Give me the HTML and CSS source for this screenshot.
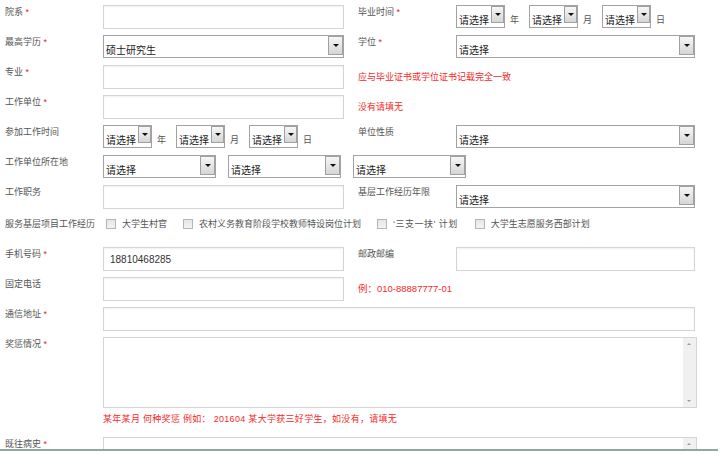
FILE: index.html
```html
<!DOCTYPE html>
<html lang="zh-CN">
<head>
  <meta charset="UTF-8">
  <title>个人信息</title>
  <link rel="stylesheet" href="styles.css">
</head>
<body>
  <div class="page">
    <form class="info-form">
      <div class="row">
        <label class="lbl">院系 <i>*</i></label>
        <div class="field"><input class="txt" type="text"></div>
        <label class="lbl lbl-r">毕业时间 <i>*</i></label>
        <div class="field field-r">
          <span class="sel sel-s"><select><option>请选择</option></select></span><span class="unit">年</span>
          <span class="sel sel-s"><select><option>请选择</option></select></span><span class="unit">月</span>
          <span class="sel sel-s"><select><option>请选择</option></select></span><span class="unit">日</span>
        </div>
      </div>

      <div class="row">
        <label class="lbl">最高学历 <i>*</i></label>
        <div class="field"><span class="sel sel-full"><select><option>硕士研究生</option></select></span></div>
        <label class="lbl lbl-r">学位 <i>*</i></label>
        <div class="field field-r"><span class="sel sel-full"><select><option>请选择</option></select></span></div>
      </div>

      <div class="row">
        <label class="lbl">专业 <i>*</i></label>
        <div class="field"><input class="txt" type="text"></div>
        <span class="hint hint-r">应与毕业证书或学位证书记载完全一致</span>
      </div>

      <div class="row">
        <label class="lbl">工作单位 <i>*</i></label>
        <div class="field"><input class="txt" type="text"></div>
        <span class="hint hint-r">没有请填无</span>
      </div>

      <div class="row">
        <label class="lbl">参加工作时间</label>
        <div class="field">
          <span class="sel sel-s"><select><option>请选择</option></select></span><span class="unit">年</span>
          <span class="sel sel-s"><select><option>请选择</option></select></span><span class="unit">月</span>
          <span class="sel sel-s"><select><option>请选择</option></select></span><span class="unit">日</span>
        </div>
        <label class="lbl lbl-r">单位性质</label>
        <div class="field field-r"><span class="sel sel-full"><select><option>请选择</option></select></span></div>
      </div>

      <div class="row">
        <label class="lbl">工作单位所在地</label>
        <span class="sel sel-m"><select><option>请选择</option></select></span>
        <span class="sel sel-m"><select><option>请选择</option></select></span>
        <span class="sel sel-m"><select><option>请选择</option></select></span>
      </div>

      <div class="row">
        <label class="lbl">工作职务</label>
        <div class="field"><input class="txt" type="text"></div>
        <label class="lbl lbl-r">基层工作经历年限</label>
        <div class="field field-r"><span class="sel sel-full"><select><option>请选择</option></select></span></div>
      </div>

      <div class="row row-check">
        <label class="lbl">服务基层项目工作经历</label>
        <label class="check"><input type="checkbox">大学生村官</label>
        <label class="check"><input type="checkbox">农村义务教育阶段学校教师特设岗位计划</label>
        <label class="check check-quote"><input type="checkbox">‘三支一扶’ 计划</label>
        <label class="check"><input type="checkbox">大学生志愿服务西部计划</label>
      </div>

      <div class="row">
        <label class="lbl">手机号码 <i>*</i></label>
        <div class="field"><input class="txt" type="text" value="18810468285"></div>
        <label class="lbl lbl-r">邮政邮编</label>
        <div class="field field-r"><input class="txt" type="text"></div>
      </div>

      <div class="row">
        <label class="lbl">固定电话</label>
        <div class="field"><input class="txt" type="text"></div>
        <span class="hint hint-r hint-num">例：010-88887777-01</span>
      </div>

      <div class="row">
        <label class="lbl">通信地址 <i>*</i></label>
        <div class="field field-wide"><input class="txt" type="text"></div>
      </div>

      <div class="row row-area">
        <label class="lbl">奖惩情况 <i>*</i></label>
        <div class="area">
          <textarea></textarea>
          <div class="scrollbar"><span class="up"></span><span class="down"></span></div>
        </div>
      </div>
      <div class="row row-note">
        <span class="hint">某年某月 何种奖惩 例如： 201604 某大学获三好学生，如没有，请填无</span>
      </div>

      <div class="row row-area">
        <label class="lbl">既往病史 <i>*</i></label>
        <div class="area">
          <textarea></textarea>
          <div class="scrollbar"><span class="up"></span><span class="down"></span></div>
        </div>
      </div>
    </form>
  </div>
  <div class="rule"></div>
</body>
</html>
```

FILE: styles.css
```css
* {
  margin: 0;
  padding: 0;
  box-sizing: border-box;
}

body {
  font-family: "Liberation Sans", "Noto Sans CJK SC", sans-serif;
  font-size: 9px;
  color: #555;
  background-color: #fff;
}

.page {
  height: 449px;
  overflow: hidden;
}

.info-form {
  padding-top: 5px;
}

.row {
  display: flex;
  align-items: flex-start;
  height: 24px;
  margin-bottom: 6px;
}

.lbl {
  width: 103px;
  padding-left: 5px;
  line-height: 14px;
  white-space: nowrap;
  flex-shrink: 0;
}

.lbl i {
  font-style: normal;
  color: #e02626;
}

.lbl-r {
  width: 98px;
  padding-left: 0;
  margin-left: 14px;
}

.field {
  display: flex;
  align-items: flex-start;
  width: 241px;
  flex-shrink: 0;
}

.field-r {
  width: 239px;
}

.field-wide {
  width: 592px;
}

.txt {
  width: 100%;
  height: 24px;
  border: 1px solid #d4d4d4;
  box-shadow: inset 0 1px 2px rgba(0, 0, 0, 0.06);
  padding: 0 6px;
  font-family: inherit;
  font-size: 10px;
  color: #333;
  outline: none;
}

/* select boxes with the old-style grey arrow button */
.sel {
  position: relative;
  display: inline-block;
  height: 23px;
  flex-shrink: 0;
}

.sel select {
  -webkit-appearance: none;
  appearance: none;
  width: 100%;
  height: 23px;
  border: 1px solid #a3a3a3;
  background-color: #fff;
  padding: 8px 0 0 2px;
  font-family: inherit;
  font-size: 10px;
  line-height: 12px;
  color: #222;
  outline: none;
}

.sel::after {
  content: "";
  position: absolute;
  top: 1px;
  right: 1px;
  bottom: 5px;
  width: 11px;
  border: 1px solid #a0a0a0;
  background: linear-gradient(to bottom, #f6f6f6, #d6d6d6);
  pointer-events: none;
}

.sel::before {
  content: "";
  position: absolute;
  z-index: 1;
  top: 8px;
  right: 4px;
  border-left: 3px solid transparent;
  border-right: 3px solid transparent;
  border-top: 3px solid #111;
  pointer-events: none;
}

.sel-s {
  width: 49px;
}

.sel-full {
  width: 100%;
}

.sel-m {
  width: 113px;
  margin-right: 12px;
}

.sel-full::after,
.sel-m::after {
  width: 13px;
  bottom: 3px;
}

.sel-full::before,
.sel-m::before {
  top: 9px;
  right: 5px;
}

.unit {
  line-height: 24px;
  margin: 3px 10px 0 5px;
  color: #555;
}

.hint {
  color: #f52a2a;
  line-height: 24px;
  white-space: nowrap;
}

.hint-r {
  margin-left: 14px;
}

.hint-num {
  font-size: 9.5px;
}

.row-check {
  height: 26px;
  margin-bottom: 6px;
}

.row-check .lbl {
  line-height: 18px;
}

.check {
  display: flex;
  align-items: center;
  line-height: 18px;
  white-space: nowrap;
  margin-right: 1px;
}

.check input {
  -webkit-appearance: none;
  appearance: none;
  width: 10px;
  height: 10px;
  border: 1px solid #b5b5b5;
  background: linear-gradient(to bottom, #e6e6e6, #f4f4f4);
  margin: 0 6px 0 3px;
}

.check + .check input {
  margin-left: 15px;
}

.check-quote {
  letter-spacing: 0.5px;
  margin-right: 2px;
}

.row-area {
  height: auto;
  margin-bottom: 0;
}

.area {
  position: relative;
  width: 594px;
  height: 71px;
}

.area textarea {
  display: block;
  width: 100%;
  height: 100%;
  border: 1px solid #d4d4d4;
  padding: 4px 18px 4px 6px;
  resize: none;
  font-family: inherit;
  font-size: 10px;
  outline: none;
}

.scrollbar {
  position: absolute;
  top: 1px;
  right: 1px;
  bottom: 1px;
  width: 13px;
  background-color: #f0f0f0;
}

.scrollbar .up,
.scrollbar .down {
  position: absolute;
  left: 4px;
  border-left: 2px solid transparent;
  border-right: 2px solid transparent;
}

.scrollbar .up {
  top: 5px;
  border-bottom: 2px solid #999;
}

.scrollbar .down {
  bottom: 5px;
  border-top: 2px solid #999;
}

.row-note {
  height: 14px;
  margin: 4px 0 11px;
  padding-left: 103px;
}

.row-note .hint {
  line-height: 14px;
  letter-spacing: 0.3px;
}

.rule {
  width: 718px;
  height: 2px;
  background-color: #8fa9a2;
}
```
